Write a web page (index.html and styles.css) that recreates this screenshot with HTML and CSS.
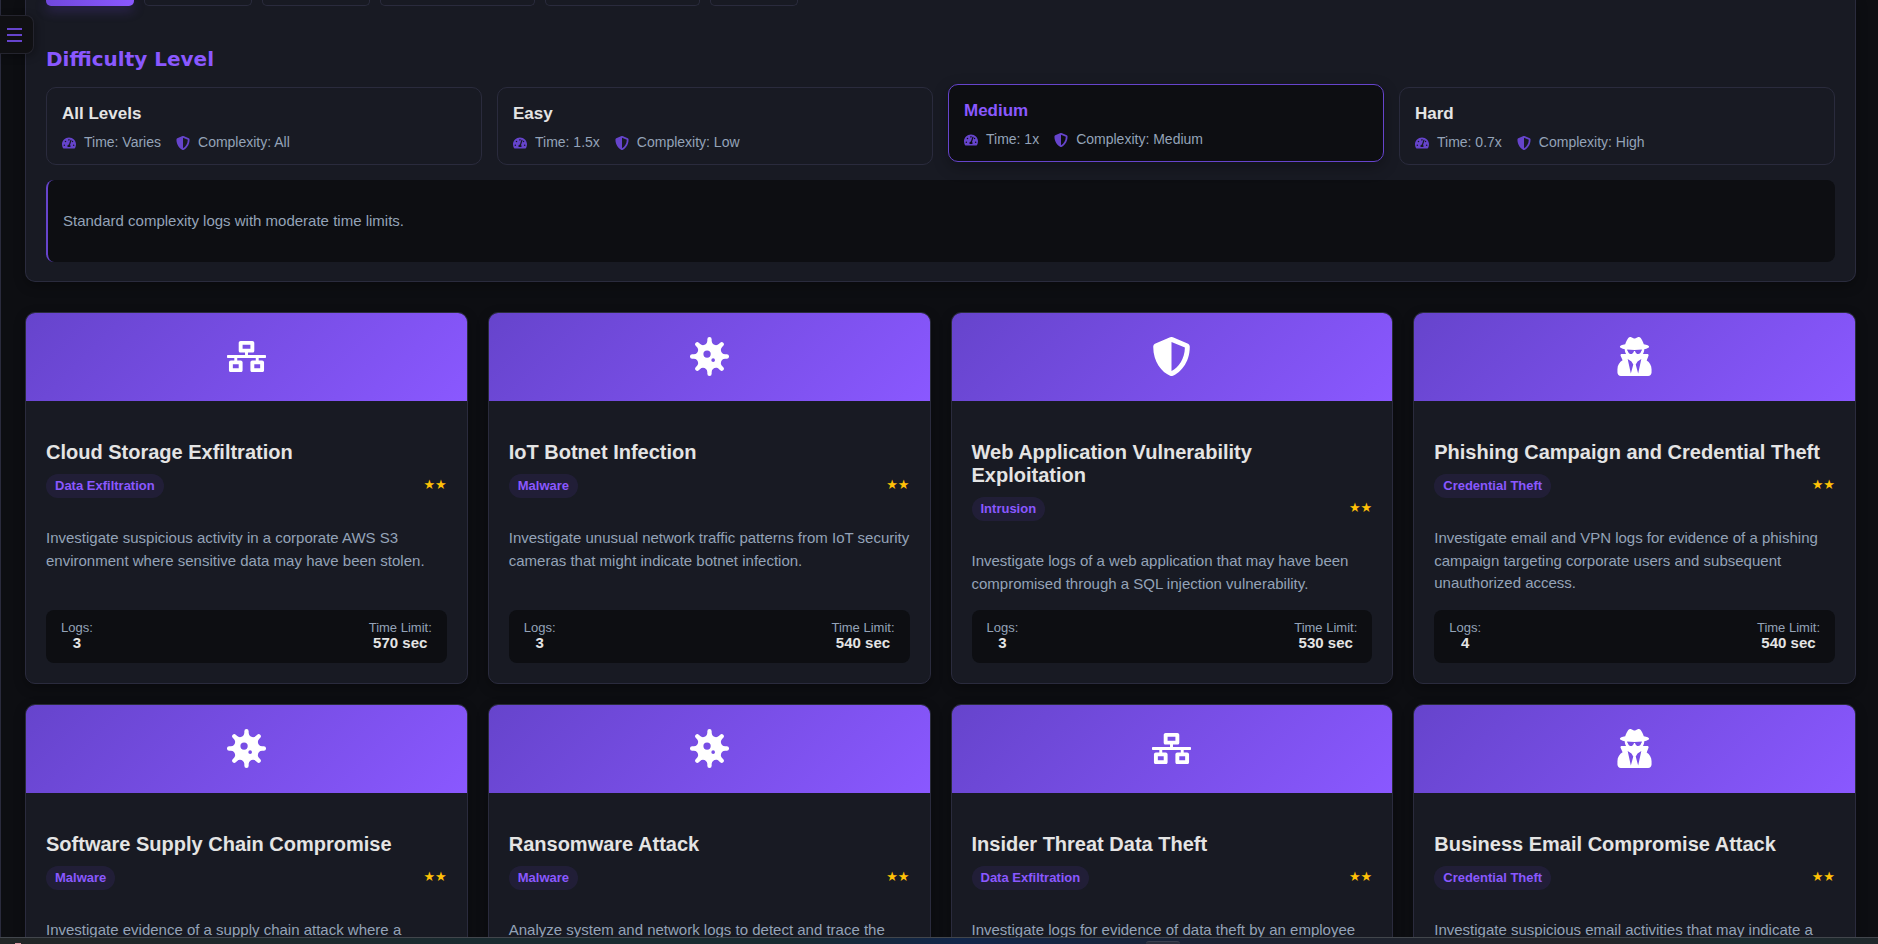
FILE: index.html
```html
<!DOCTYPE html>
<html lang="en">
<head>
<meta charset="utf-8">
<meta name="viewport" content="width=device-width, initial-scale=1">
<title>Log Analysis Scenarios</title>
<link rel="stylesheet" href="styles.css">
</head>
<body>
<svg class="sprite" aria-hidden="true">
  <symbol id="gauge" viewBox="0 0 576 512"><path d="M288 32C128.94 32 0 160.94 0 320c0 52.8 14.25 102.26 39.06 144.8 5.61 9.62 16.3 15.2 27.44 15.2h443c11.14 0 21.83-5.58 27.44-15.2C561.75 422.26 576 372.8 576 320c0-159.06-128.94-288-288-288zm0 64c14.71 0 26.58 10.13 30.32 23.65-1.11 2.26-2.64 4.23-3.45 6.67l-9.22 27.67c-5.13 3.49-10.97 6.01-17.64 6.01-17.67 0-32-14.33-32-32S270.33 96 288 96zM96 384c-17.67 0-32-14.33-32-32s14.33-32 32-32 32 14.33 32 32-14.33 32-32 32zm48-160c-17.67 0-32-14.33-32-32s14.33-32 32-32 32 14.33 32 32-14.33 32-32 32zm246.77-72.41l-61.33 184C343.13 347.33 352 364.54 352 384c0 11.72-3.38 22.55-8.88 32H232.88c-5.5-9.45-8.88-20.28-8.88-32 0-33.94 26.5-61.43 59.9-63.59l61.34-184.01c4.17-12.56 17.73-19.45 30.36-15.17 12.57 4.19 19.35 17.79 15.17 30.36zm14.66 57.2l15.52-46.55c3.47-1.29 7.13-2.23 11.05-2.23 17.67 0 32 14.33 32 32s-14.33 32-32 32c-11.38-.01-20.89-6.28-26.57-15.22zM480 384c-17.67 0-32-14.33-32-32s14.33-32 32-32 32 14.33 32 32-14.33 32-32 32z"/></symbol>
  <symbol id="shield" viewBox="0 0 512 512"><path d="M466.5 83.7l-192-80a48.15 48.15 0 0 0-36.9 0l-192 80C27.7 91.1 16 108.6 16 128c0 198.5 114.5 335.7 221.5 380.3 11.8 4.9 25.1 4.9 36.9 0C360.1 472.6 496 349.3 496 128c0-19.4-11.7-36.9-29.5-44.3zM256.1 446.3l-.1-381 175.9 73.3c-3.3 151.4-82.1 261.1-175.8 307.7z"/></symbol>
  <symbol id="network" viewBox="0 0 640 512"><path d="M640 264v-16c0-8.84-7.16-16-16-16H344v-40h72c17.67 0 32-14.33 32-32V32c0-17.67-14.33-32-32-32H224c-17.67 0-32 14.33-32 32v128c0 17.67 14.33 32 32 32h72v40H16c-8.84 0-16 7.16-16 16v16c0 8.84 7.16 16 16 16h104v40H64c-17.67 0-32 14.33-32 32v128c0 17.67 14.33 32 32 32h160c17.67 0 32-14.33 32-32V352c0-17.67-14.33-32-32-32h-56v-40h304v40h-56c-17.67 0-32 14.33-32 32v128c0 17.67 14.33 32 32 32h160c17.67 0 32-14.33 32-32V352c0-17.67-14.33-32-32-32h-56v-40h104c8.84 0 16-7.16 16-16zM256 128V64h128v64H256zm-64 320H96v-64h96v64zm352 0h-96v-64h96v64z"/></symbol>
  <symbol id="virus" viewBox="0 0 512 512"><path d="M483.55,227.55H462c-50.68,0-76.07-61.27-40.23-97.11L437,115.19A28.44,28.44,0,0,0,396.8,75L381.56,90.22c-35.84,35.83-97.11,10.45-97.11-40.23V28.44a28.45,28.45,0,0,0-56.9,0V50c0,50.68-61.27,76.06-97.11,40.23L115.2,75A28.44,28.44,0,0,0,75,115.19l15.25,15.25c35.84,35.84,10.45,97.11-40.23,97.11H28.45a28.45,28.45,0,1,0,0,56.89H50c50.68,0,76.07,61.28,40.23,97.12L75,396.8A28.45,28.45,0,0,0,115.2,437l15.24-15.25c35.84-35.84,97.11-10.45,97.11,40.23v21.54a28.45,28.45,0,0,0,56.9,0V462c0-50.68,61.27-76.07,97.11-40.23L396.8,437A28.45,28.45,0,0,0,437,396.8l-15.25-15.24c-35.84-35.84-10.45-97.12,40.23-97.12h21.54a28.45,28.45,0,1,0,0-56.89ZM224,272a48,48,0,1,1,48-48A48,48,0,0,1,224,272Zm80,56a24,24,0,1,1,24-24A24,24,0,0,1,304,328Z"/></symbol>
  <symbol id="agent" viewBox="0 0 448 512"><path d="M383.9 308.3l23.9-62.6c4-10.5-3.7-21.7-15-21.7h-58.5c11-18.9 17.8-40.6 17.8-64v-.3c39.2-7.8 64-19.1 64-31.7 0-13.3-27.3-25.1-70.1-33-9.2-32.8-27-65.8-40.6-82.8-9.5-11.9-25.9-15.6-39.5-8.8l-27.6 13.8c-9 4.5-19.6 4.5-28.6 0L182.1 3.4c-13.6-6.8-30-3.1-39.5 8.8-13.5 17-31.4 50-40.6 82.8-42.7 7.9-70 19.7-70 33 0 12.6 24.8 23.9 64 31.7v.3c0 23.4 6.8 45.1 17.8 64H56.3c-11.5 0-19.2 11.7-14.7 22.3l25.8 60.2C27.3 329.8 0 372.7 0 422.4v44.8C0 491.9 20.1 512 44.8 512h358.4c24.7 0 44.8-20.1 44.8-44.8v-44.8c0-48.4-25.8-90.4-64.1-114.1zM176 480l-41.6-192 49.6 32 24 40-32 120zm96 0l-32-120 24-40 49.6-32L272 480zm41.7-298.5c-3.9 11.9-7 24.6-16.5 33.4-10.1 9.3-48 22.4-64-25-2.8-8.4-15.4-8.4-18.3 0-17 50.2-56 32.4-64 25-9.5-8.8-12.7-21.5-16.5-33.4-.8-2.5-6.3-5.7-6.3-5.8v-10.8c28.3 3.6 61 5.8 96 5.8s67.7-2.1 96-5.8v10.8c-.1.1-5.6 3.2-6.4 5.8z"/></symbol>
</svg>

<button class="menu-toggle" type="button" aria-label="Open menu">
  <svg class="menu-icon" viewBox="0 0 15 14" aria-hidden="true"><path d="M0 1h15M0 7h15M0 13h15"/></svg>
</button>

<main class="page">
  <section class="filters">
    <div class="tabs">
      <button class="tab tab-short active" type="button" aria-label="All"></button>
      <button class="tab tab-medium" type="button" aria-label="Malware"></button>
      <button class="tab tab-medium" type="button" aria-label="Intrusion"></button>
      <button class="tab tab-long" type="button" aria-label="Data Exfiltration"></button>
      <button class="tab tab-long" type="button" aria-label="Credential Theft"></button>
      <button class="tab tab-short" type="button" aria-label="Other"></button>
    </div>
    <h2 class="section-title">Difficulty Level</h2>
    <div class="levels">
      <button class="level" type="button">
        <span class="level-name">All Levels</span>
        <span class="level-meta"><svg><use href="#gauge"/></svg><span>Time: Varies</span><svg><use href="#shield"/></svg><span>Complexity: All</span></span>
      </button>
      <button class="level" type="button">
        <span class="level-name">Easy</span>
        <span class="level-meta"><svg><use href="#gauge"/></svg><span>Time: 1.5x</span><svg><use href="#shield"/></svg><span>Complexity: Low</span></span>
      </button>
      <button class="level active" type="button" aria-pressed="true">
        <span class="level-name">Medium</span>
        <span class="level-meta"><svg><use href="#gauge"/></svg><span>Time: 1x</span><svg><use href="#shield"/></svg><span>Complexity: Medium</span></span>
      </button>
      <button class="level" type="button">
        <span class="level-name">Hard</span>
        <span class="level-meta"><svg><use href="#gauge"/></svg><span>Time: 0.7x</span><svg><use href="#shield"/></svg><span>Complexity: High</span></span>
      </button>
    </div>
    <p class="level-note">Standard complexity logs with moderate time limits.</p>
  </section>

  <section class="scenarios">
    <article class="card">
      <div class="card-top"><svg><use href="#network"/></svg></div>
      <div class="card-body">
        <h3>Cloud Storage Exfiltration</h3>
        <div class="card-tags"><span class="badge">Data Exfiltration</span><span class="stars">★★</span></div>
        <p class="card-text">Investigate suspicious activity in a corporate AWS S3 environment where sensitive data may have been stolen.</p>
        <dl class="stats"><div><dt>Logs:</dt><dd>3</dd></div><div><dt>Time Limit:</dt><dd>570 sec</dd></div></dl>
      </div>
    </article>
    <article class="card">
      <div class="card-top"><svg><use href="#virus"/></svg></div>
      <div class="card-body">
        <h3>IoT Botnet Infection</h3>
        <div class="card-tags"><span class="badge">Malware</span><span class="stars">★★</span></div>
        <p class="card-text">Investigate unusual network traffic patterns from IoT security cameras that might indicate botnet infection.</p>
        <dl class="stats"><div><dt>Logs:</dt><dd>3</dd></div><div><dt>Time Limit:</dt><dd>540 sec</dd></div></dl>
      </div>
    </article>
    <article class="card">
      <div class="card-top"><svg><use href="#shield"/></svg></div>
      <div class="card-body">
        <h3>Web Application Vulnerability Exploitation</h3>
        <div class="card-tags"><span class="badge">Intrusion</span><span class="stars">★★</span></div>
        <p class="card-text">Investigate logs of a web application that may have been compromised through a SQL injection vulnerability.</p>
        <dl class="stats"><div><dt>Logs:</dt><dd>3</dd></div><div><dt>Time Limit:</dt><dd>530 sec</dd></div></dl>
      </div>
    </article>
    <article class="card">
      <div class="card-top"><svg><use href="#agent"/></svg></div>
      <div class="card-body">
        <h3>Phishing Campaign and Credential Theft</h3>
        <div class="card-tags"><span class="badge">Credential Theft</span><span class="stars">★★</span></div>
        <p class="card-text">Investigate email and VPN logs for evidence of a phishing campaign targeting corporate users and subsequent unauthorized access.</p>
        <dl class="stats"><div><dt>Logs:</dt><dd>4</dd></div><div><dt>Time Limit:</dt><dd>540 sec</dd></div></dl>
      </div>
    </article>
    <article class="card">
      <div class="card-top"><svg><use href="#virus"/></svg></div>
      <div class="card-body">
        <h3>Software Supply Chain Compromise</h3>
        <div class="card-tags"><span class="badge">Malware</span><span class="stars">★★</span></div>
        <p class="card-text">Investigate evidence of a supply chain attack where a</p>
      </div>
    </article>
    <article class="card">
      <div class="card-top"><svg><use href="#virus"/></svg></div>
      <div class="card-body">
        <h3>Ransomware Attack</h3>
        <div class="card-tags"><span class="badge">Malware</span><span class="stars">★★</span></div>
        <p class="card-text">Analyze system and network logs to detect and trace the</p>
      </div>
    </article>
    <article class="card">
      <div class="card-top"><svg><use href="#network"/></svg></div>
      <div class="card-body">
        <h3>Insider Threat Data Theft</h3>
        <div class="card-tags"><span class="badge">Data Exfiltration</span><span class="stars">★★</span></div>
        <p class="card-text">Investigate logs for evidence of data theft by an employee</p>
      </div>
    </article>
    <article class="card">
      <div class="card-top"><svg><use href="#agent"/></svg></div>
      <div class="card-body">
        <h3>Business Email Compromise Attack</h3>
        <div class="card-tags"><span class="badge">Credential Theft</span><span class="stars">★★</span></div>
        <p class="card-text">Investigate suspicious email activities that may indicate a</p>
      </div>
    </article>
  </section>
</main>
<div class="taskbar"></div>
</body>
</html>
```

FILE: styles.css
```css
:root {
  --bg: #0d0e12;
  --panel: #181a23;
  --line: #2a2b3d;
  --violet: #6644cc;
  --violet-bright: #8a58ff;
  --text: #e4e4e4;
  --muted: #94a3b8;
}

* { box-sizing: border-box; }

body {
  margin: 0;
  height: 100vh;
  overflow: hidden;
  background: var(--bg);
  color: var(--text);
  font-family: "Liberation Sans", Arial, sans-serif;
}

button { font: inherit; color: inherit; }
h2, h3, p, dl, dd { margin: 0; }

.sprite { position: absolute; width: 0; height: 0; }

.page {
  height: 100vh;
  overflow: hidden;
  border-left: 1px solid var(--line);
  padding: 0 22px 0 24px;
}

.menu-toggle {
  position: fixed;
  top: 15px;
  left: 0;
  width: 34px;
  height: 39px;
  padding: 0 0 0 7px;
  display: flex;
  align-items: center;
  background: #101013;
  border: 1px solid #24242e;
  border-left: 0;
  border-radius: 0 8px 8px 0;
  box-shadow: 2px 2px 8px rgba(0, 0, 0, 0.3);
}
.menu-icon {
  width: 15px;
  height: 14px;
  stroke: var(--violet);
  stroke-width: 2;
}

.filters {
  padding: 0 20px 19px;
  background: var(--panel);
  border: 1px solid var(--line);
  border-top: 0;
  border-radius: 0 0 10px 10px;
  box-shadow: 0 4px 12px rgba(0, 0, 0, 0.3);
}

.tabs { display: flex; gap: 10px; }
.tab {
  height: 6px;
  padding: 0;
  background: transparent;
  border: 1px solid var(--line);
  border-top: 0;
  border-radius: 0 0 5px 5px;
}
.tab.active {
  border: 0;
  background: linear-gradient(90deg, #7048dc, var(--violet-bright));
  box-shadow: 0 4px 12px rgba(102, 68, 204, 0.4);
}
.tab-short { width: 88px; }
.tab-medium { width: 108px; }
.tab-long { width: 155px; }

.section-title {
  margin: 41px 0 16px;
  font: bold 20px/24px "DejaVu Sans", sans-serif;
  color: var(--violet-bright);
}

.levels {
  display: grid;
  grid-template-columns: repeat(4, 1fr);
  gap: 15px;
}
.level {
  display: flex;
  flex-direction: column;
  gap: 10px;
  padding: 16px 15px 13px;
  text-align: left;
  background: transparent;
  border: 1px solid var(--line);
  border-radius: 10px;
}
.level.active {
  background: var(--bg);
  border-color: var(--violet);
  box-shadow: 0 5px 15px rgba(0, 0, 0, 0.3);
  transform: translateY(-3px);
}
.level-name { font-weight: bold; font-size: 17px; line-height: 20px; }
.level.active .level-name { color: var(--violet-bright); }
.level-meta {
  display: flex;
  align-items: center;
  font-size: 14px;
  line-height: 17px;
  color: var(--muted);
}
.level-meta svg {
  width: 14px;
  height: 14px;
  margin-right: 8px;
  fill: var(--violet);
}
.level-meta span { margin-right: 15px; }

.level-note {
  margin-top: 15px;
  padding: 30px 15px;
  background: var(--bg);
  border-left: 2px solid var(--violet);
  border-radius: 8px;
  font-size: 15px;
  line-height: 22px;
  color: var(--muted);
}

.scenarios {
  display: grid;
  grid-template-columns: repeat(4, 1fr);
  grid-auto-rows: 1fr;
  gap: 20px;
  margin-top: 30px;
}
.card {
  display: flex;
  flex-direction: column;
  overflow: hidden;
  background: var(--panel);
  border: 1px solid var(--line);
  border-radius: 10px;
  box-shadow: 0 4px 12px rgba(0, 0, 0, 0.3);
}
.card-top {
  display: flex;
  justify-content: center;
  padding: 24px 0 25px;
  background: linear-gradient(135deg, var(--violet), var(--violet-bright));
}
.card-top svg { width: 39px; height: 39px; fill: #fff; }
.card-body {
  flex: 1;
  display: flex;
  flex-direction: column;
  padding: 40px 20px 20px;
}
.card-body h3 { padding-right: 8px; font-size: 20px; line-height: 23px; }
.card-tags {
  display: flex;
  justify-content: space-between;
  align-items: flex-start;
  margin: 10px 0 29px;
}
.badge {
  padding: 0 9px;
  border-radius: 12px;
  background: rgba(102, 68, 204, 0.12);
  color: var(--violet-bright);
  font-size: 13px;
  font-weight: bold;
  line-height: 24px;
}
.stars {
  color: #ffc107;
  font: 13px/22px "DejaVu Sans", sans-serif;
}
.card-text {
  flex: 1;
  font-size: 15px;
  line-height: 1.5;
  color: var(--muted);
}
.stats {
  display: flex;
  justify-content: space-between;
  margin-top: 15px;
  padding: 10px 15px 12px;
  background: var(--bg);
  border-radius: 8px;
  text-align: center;
}
.stats dt { font-size: 13px; line-height: 15px; color: var(--muted); }
.stats dd { font-size: 15px; line-height: 16px; font-weight: bold; }

.taskbar {
  position: fixed;
  left: 0;
  right: 0;
  bottom: 0;
  height: 7px;
  border-top: 1px solid #42464c;
  background: linear-gradient(90deg, #222526, #1a2b30 25%, #182a30 42%, #12264a 51%, #1b2232 65%, #232428 85%, #1a2c30 93%, #20272b);
}
/* Top edge of the open application's button */
.taskbar::before {
  content: "";
  position: absolute;
  top: 3px;
  left: 61%;
  width: 34px;
  height: 3px;
  background: #2a2e3c;
  border-top: 1px solid #3c4150;
  border-radius: 3px 3px 0 0;
}
.taskbar::after {
  content: "";
  position: absolute;
  bottom: 0;
  left: 15px;
  width: 6px;
  height: 1px;
  background: #d99aa4;
}
```
